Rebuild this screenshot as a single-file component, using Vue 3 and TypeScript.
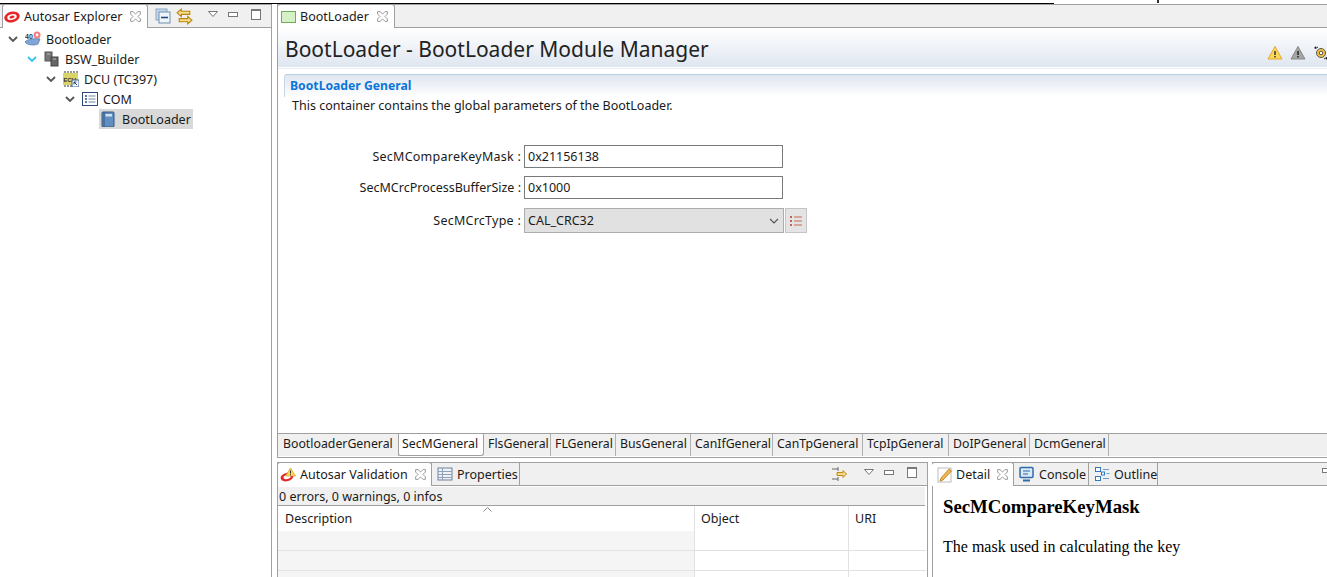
<script setup lang="ts">
const tree = [
  { label: 'Bootloader', icon: 'root', level: 0, chevron: 'gray' },
  { label: 'BSW_Builder', icon: 'bsw', level: 1, chevron: 'cyan' },
  { label: 'DCU (TC397)', icon: 'ecu', level: 2, chevron: 'gray' },
  { label: 'COM', icon: 'list', level: 3, chevron: 'gray' },
  { label: 'BootLoader', icon: 'book', level: 4, chevron: '', selected: true },
]

const moduleTabs = [
  { label: 'BootloaderGeneral', width: 121 },
  { label: 'SecMGeneral', width: 86, active: true },
  { label: 'FlsGeneral', width: 67 },
  { label: 'FLGeneral', width: 65 },
  { label: 'BusGeneral', width: 75 },
  { label: 'CanIfGeneral', width: 82 },
  { label: 'CanTpGeneral', width: 90 },
  { label: 'TcpIpGeneral', width: 86 },
  { label: 'DoIPGeneral', width: 81 },
  { label: 'DcmGeneral', width: 79 },
]
</script>

<template>
  <div class="screen">
    <div class="top-strip">
      <span class="top-hook"></span>
    </div>
    <div class="workbench">
      <!-- left view -->
      <aside class="explorer">
        <div class="view-head">
          <div class="view-tab explorer-tab">
            <svg class="ico" viewBox="0 0 16 16">
              <ellipse cx="8" cy="8" rx="7.800" ry="5.400" fill="#e8262a" transform="rotate(-14 8 8)" />
              <ellipse cx="8" cy="8" rx="4.800" ry="2.800" fill="#fff" transform="rotate(-14 8 8)" />
              <ellipse cx="8" cy="8" rx="2.600" ry="1.400" fill="#e8262a" transform="rotate(-14 8 8)" />
            </svg>
            <span>Autosar Explorer</span>
            <svg class="close" viewBox="1 1 9 9">
              <path d="M1.500 1.500h2l2 2 2-2h2v2l-2 2 2 2v2h-2l-2-2-2 2h-2v-2l2-2-2-2z" fill="#fff" stroke="#999" stroke-width=".8" />
            </svg>
          </div>
          <div class="head-tools">
            <svg class="ico" viewBox="0 0 16 16">
              <rect x="1" y="1" width="11" height="11" fill="#c4d6e8" stroke="#8aa8c4" />
              <rect x="4" y="4" width="11" height="11" fill="#eef4fa" stroke="#6e8fb0" />
              <path d="M6 9.500h7" stroke="#1f4f86" stroke-width="1.600" />
            </svg>
            <svg class="ico sync" viewBox="0 0 16 16">
              <path d="M5 1 1 4.500 5 8V6h8V3H5z" fill="#f6dc8c" stroke="#b8860b" />
              <path d="M11 8l4 3.500-4 3.500v-2H3v-3h8z" fill="#f6dc8c" stroke="#b8860b" />
            </svg>
            <span class="win-ctrls">
              <svg class="menu-tri" viewBox="0 0 10 6"><path d="M.5.500h9L5 5.500z" fill="#fff" stroke="#777" /></svg>
              <span class="ctl-min"></span>
              <span class="ctl-max"></span>
            </span>
          </div>
        </div>
        <ul class="tree">
          <li v-for="row in tree" :key="row.icon" class="tree-row" :style="{ paddingLeft: 8 + row.level * 19 + 'px' }">
            <span class="chevron-slot">
              <svg v-if="row.chevron" viewBox="0 0 10 7" class="chevron">
                <path d="M1 1l4 4 4-4" fill="none" :stroke="row.chevron === 'cyan' ? '#35c2f2' : '#555'" stroke-width="1.800" />
              </svg>
            </span>
            <span class="tree-item" :class="{ selected: row.selected }">
              <svg v-if="row.icon === 'root'" class="ico" viewBox="0 0 16 16">
                <path d="M0 11c2-3 10-4 15-3l-2 5c-4 2-11 1-13-2z" fill="#7ea6d8" stroke="#4c6f9f" stroke-width=".7" />
                <text x="0" y="7.500" class="tiny-num">40</text>
                <circle cx="12" cy="4" r="3.500" fill="#f47c7c" />
                <circle cx="12" cy="4" r="1.400" fill="#fff" />
              </svg>
              <svg v-else-if="row.icon === 'bsw'" class="ico" viewBox="0 0 16 16">
                <rect x="1" y="1" width="7" height="9" fill="#777" stroke="#555" />
                <rect x="7" y="6" width="7" height="9" fill="#666" stroke="#444" />
                <path d="M3 3h3M9 8h3" stroke="#bbb" />
              </svg>
              <svg v-else-if="row.icon === 'ecu'" class="ico" viewBox="0 0 16 16">
                <path d="M2 0v2M5 0v2M8 0v2M11 0v2M14 0v2M2 14v2M5 14v2M8 14v2" stroke="#333" />
                <rect x="0" y="2" width="15" height="12" fill="#d8d46a" />
                <text x=".5" y="10.500" class="tiny-ecu">ECU</text>
                <rect x="9" y="9" width="7" height="7" fill="#fff" stroke="#3b5f8c" />
                <path d="M11 11l3 3M11 11h2.500M11 11v2.500" stroke="#1c3f70" />
              </svg>
              <svg v-else-if="row.icon === 'list'" class="ico" viewBox="0 0 16 16">
                <rect x=".5" y="1.500" width="15" height="13" fill="#fff" stroke="#2c4a78" />
                <path d="M3 5h2M3 8h2M3 11h2" stroke="#2c4a78" stroke-width="1.400" />
                <path d="M6.500 5h7M6.500 8h7M6.500 11h7" stroke="#6f87a8" />
              </svg>
              <svg v-else class="ico" viewBox="0 0 16 16">
                <rect x="2" y="1" width="12" height="15" rx="1" fill="#5f8fc0" stroke="#32587f" />
                <path d="M4 1v15" stroke="#32587f" />
                <rect x="5.500" y="3" width="6.500" height="2.500" fill="#cfe0f0" />
              </svg>
              <span>{{ row.label }}</span>
            </span>
          </li>
        </ul>
      </aside>

      <main class="main-col">
        <!-- editor -->
        <section class="editor">
          <div class="view-head">
            <div class="view-tab editor-tab">
              <svg class="ico" viewBox="0 0 16 16">
                <rect x=".5" y="2.500" width="14" height="11" fill="#d6f0c8" stroke="#6fae58" />
              </svg>
              <span>BootLoader</span>
              <svg class="close" viewBox="1 1 9 9">
                <path d="M1.500 1.500h2l2 2 2-2h2v2l-2 2 2 2v2h-2l-2-2-2 2h-2v-2l2-2-2-2z" fill="#fff" stroke="#999" stroke-width=".8" />
              </svg>
            </div>
          </div>
          <header class="form-head">
            <h1>BootLoader - BootLoader Module Manager</h1>
            <div class="form-actions">
              <svg class="ico" viewBox="0 0 16 16">
                <path d="M8 1.500 15 14H1z" fill="#fbd95c" stroke="#e2a92c" />
                <path d="M8 6v4M8 11v1.500" stroke="#333" stroke-width="1.500" />
              </svg>
              <svg class="ico" viewBox="0 0 16 16">
                <path d="M8 1.500 15 14H1z" fill="#a5a5a5" stroke="#888" />
                <path d="M8 6v4M8 11v1.500" stroke="#222" stroke-width="1.500" />
              </svg>
              <svg class="ico" viewBox="0 0 16 16">
                <circle cx="8" cy="8" r="4.500" fill="#f5c542" stroke="#555" />
                <circle cx="8" cy="8" r="1.800" fill="#fff" stroke="#555" />
                <path d="M1 3l2-2v3zM15 13l-2 2v-3z" fill="#222" />
                <path d="M2.500 3.500 5 2M13.500 12.500 11 14" stroke="#222" />
              </svg>
            </div>
          </header>
          <div class="form-section">
            <div class="section-bar">BootLoader General</div>
            <p class="section-desc">This container contains the global parameters of the BootLoader.</p>
            <div class="fields">
              <label class="wide-label">SecMCompareKeyMask :</label>
              <div class="text-field">0x21156138</div>
              <label>SecMCrcProcessBufferSize :</label>
              <div class="text-field">0x1000</div>
              <label class="wide-label combo-label">SecMCrcType :</label>
              <div class="combo-line">
                <div class="combo">
                  <span>CAL_CRC32</span>
                  <svg class="combo-arrow" viewBox="0 0 10 6">
                    <path d="M1 1l4 4 4-4" fill="none" stroke="#555" stroke-width="1.200" />
                  </svg>
                </div>
                <div class="combo-btn">
                  <svg viewBox="0 0 14 12" class="list-ico">
                    <path d="M1 2h2M1 6h2M1 10h2" stroke="#b03a20" stroke-width="1.400" />
                    <path d="M5 2h8M5 6h8M5 10h8" stroke="#c8684f" />
                  </svg>
                </div>
              </div>
            </div>
          </div>
          <nav class="module-tabs">
            <div
              v-for="tab in moduleTabs"
              :key="tab.label"
              class="module-tab"
              :class="{ active: tab.active }"
              :style="{ width: tab.width + 'px' }"
            >
              {{ tab.label }}
            </div>
          </nav>
        </section>

        <div class="bottom-row">
          <!-- validation view -->
          <section class="validation">
            <div class="view-head">
              <div class="view-tab validation-tab">
                <svg class="ico" viewBox="0 0 16 16">
                  <ellipse cx="7" cy="10" rx="6.500" ry="4.200" fill="#e8262a" transform="rotate(-14 7 10)" />
                  <ellipse cx="7" cy="10" rx="3.600" ry="2" fill="#fff" transform="rotate(-14 7 10)" />
                  <path d="M10.500 1 15.500 9h-10z" fill="#fbd95c" stroke="#d69a24" stroke-width=".7" />
                  <path d="M10.500 3.500v3M10.500 7.200v1" stroke="#333" />
                </svg>
                <span>Autosar Validation</span>
                <svg class="close" viewBox="1 1 9 9">
                  <path d="M1.500 1.500h2l2 2 2-2h2v2l-2 2 2 2v2h-2l-2-2-2 2h-2v-2l2-2-2-2z" fill="#fff" stroke="#999" stroke-width=".8" />
                </svg>
              </div>
              <div class="plain-tab properties-tab">
                <svg class="ico" viewBox="0 0 16 16">
                  <rect x="1" y="2" width="14" height="12" fill="#eef2f7" stroke="#6d8199" />
                  <path d="M1 5.500h14M1 8.500h14M1 11.500h14M5.500 2v12" stroke="#8ea1b6" />
                </svg>
                <span>Properties</span>
              </div>
              <div class="validation-tools">
                <svg class="ico" viewBox="0 0 16 16">
                  <path d="M1 3h6M1 13h6M7 1v4M7 11v4" stroke="#666" />
                  <path d="M6 6.500h6V4.500l3.500 3.500-3.500 3.500V9.500H6z" fill="#f4d98c" stroke="#c08a16" />
                </svg>
                <span class="win-ctrls">
                  <svg class="menu-tri" viewBox="0 0 10 6"><path d="M.5.500h9L5 5.500z" fill="#fff" stroke="#777" /></svg>
                  <span class="ctl-min"></span>
                  <span class="ctl-max"></span>
                </span>
              </div>
            </div>
            <div class="status-line">0 errors, 0 warnings, 0 infos</div>
            <div class="table">
              <div class="col-head desc-col">
                Description
                <svg class="sort" viewBox="0 0 9 5"><path d="M.5 4.500 4.500.500l4 4" fill="none" stroke="#888" /></svg>
              </div>
              <div class="col-head">Object</div>
              <div class="col-head no-line">URI</div>
              <template v-for="n in 3" :key="n">
                <div class="cell desc-cell"></div>
                <div class="cell"></div>
                <div class="cell no-line"></div>
              </template>
            </div>
          </section>

          <!-- detail view -->
          <section class="detail">
            <div class="view-head">
              <div class="view-tab detail-tab">
                <svg class="ico" viewBox="0 0 16 16">
                  <rect x="1" y="1" width="13" height="14" fill="#fff" stroke="#bbb" />
                  <path d="M4 11 12 2l2.500 2L6 13l-3 1z" fill="#f2b84b" stroke="#b87a1e" stroke-width=".8" />
                </svg>
                <span>Detail</span>
                <svg class="close" viewBox="1 1 9 9">
                  <path d="M1.500 1.500h2l2 2 2-2h2v2l-2 2 2 2v2h-2l-2-2-2 2h-2v-2l2-2-2-2z" fill="#fff" stroke="#999" stroke-width=".8" />
                </svg>
              </div>
              <div class="plain-tab console-tab">
                <svg class="ico" viewBox="0 0 16 16">
                  <rect x="1" y="1.500" width="13" height="10" rx="1" fill="#dbe8f5" stroke="#2f6cab" stroke-width="1.500" />
                  <path d="M4 14.500h7" stroke="#2f6cab" stroke-width="2" />
                  <path d="M4 5h7M4 8h5" stroke="#2f6cab" />
                </svg>
                <span>Console</span>
              </div>
              <div class="plain-tab outline-tab">
                <svg class="ico" viewBox="0 0 16 16">
                  <rect x="1.500" y="1.500" width="5" height="4" fill="#fff" stroke="#2f78c0" />
                  <rect x="1.500" y="10.500" width="5" height="4" fill="#fff" stroke="#2f78c0" />
                  <rect x="7.500" y="6" width="3" height="3" fill="#fff" stroke="#2f78c0" />
                  <path d="M9 3.500h6M12.500 7.500h3M9 12.500h6" stroke="#6f9cc8" />
                </svg>
                <span>Outline</span>
              </div>
              <div class="detail-tools"><span class="ctl-min"></span></div>
            </div>
            <article class="detail-body">
              <h2>SecMCompareKeyMask</h2>
              <p>The mask used in calculating the key</p>
            </article>
          </section>
        </div>
      </main>
    </div>
  </div>
</template>

<style>
html,
body {
  margin: 0;
  background: #fff;
  overflow: hidden;
}
</style>

<style scoped>
.screen {
  width: 1327px;
  height: 577px;
  overflow: hidden;
  display: flex;
  flex-direction: column;
  font-family: 'Noto Sans', 'Open Sans', sans-serif;
  font-size: 12.500px;
  color: #1a1a1a;
  background: #fff;
}

.top-strip {
  position: relative;
  height: 3px;
  flex: none;
  border-bottom: 1px solid #000;
  margin-right: 273px;
}

.top-hook {
  position: absolute;
  left: 1157px;
  top: 0;
  width: 2px;
  height: 3px;
  background: #333;
}

.workbench {
  flex: 1;
  min-height: 0;
  display: flex;
}

.explorer {
  width: 271px;
  flex: none;
  border-right: 1px solid #a0a0a0;
}

.view-head {
  display: flex;
  align-items: stretch;
  height: 22px;
  background: #f0f0f0;
  border-top: 1px solid #a0a0a0;
  border-bottom: 1px solid #a0a0a0;
}

.view-tab {
  display: flex;
  align-items: center;
  gap: 4px;
  height: 24px;
  background: #fff;
  border: 1px solid #a0a0a0;
  border-bottom: 0;
  border-top-left-radius: 3px;
  border-top-right-radius: 3px;
  margin-top: -1px;
  white-space: nowrap;
  box-sizing: border-box;
}

.plain-tab {
  display: flex;
  align-items: center;
  gap: 4px;
  border-right: 1px solid #a0a0a0;
  white-space: nowrap;
}

.ico {
  width: 16px;
  height: 16px;
  flex: none;
}

.close {
  width: 11px;
  height: 11px;
  flex: none;
}

.explorer-tab {
  width: 146px;
  margin-left: 2px;
  padding-left: 1px;
}

.explorer-tab .close {
  margin-left: 4px;
}

.head-tools {
  flex: 1;
  display: flex;
  align-items: center;
  padding-left: 7px;
  gap: 5px;
}

.sync {
  width: 17px;
  height: 17px;
}

.win-ctrls {
  margin-left: auto;
  display: flex;
  align-items: center;
  gap: 10px;
  padding-right: 10px;
  margin-top: -4px;
}

.menu-tri {
  width: 10px;
  height: 6px;
}

.ctl-min {
  display: block;
  width: 8px;
  height: 3px;
  border: 1px solid #777;
  background: #fff;
}

.ctl-max {
  display: block;
  width: 8px;
  height: 8px;
  margin-left: 3px;
  border: 1px solid #777;
  border-top-width: 2px;
  background: #fff;
}

.tree {
  list-style: none;
  margin: 1px 0 0;
  padding: 0;
}

.tree-row {
  display: flex;
  align-items: center;
  height: 20px;
}

.chevron-slot {
  width: 10px;
  margin-right: 6px;
  display: flex;
}

.chevron {
  width: 10px;
  height: 7px;
}

.tree-item {
  display: flex;
  align-items: center;
  gap: 5px;
  height: 20px;
  padding: 0 1px;
}

.tree-item.selected {
  background: #d9d9d9;
  margin-left: -1px;
  gap: 6px;
  padding-right: 2px;
}

.tiny-num {
  font-size: 7px;
  font-weight: 700;
  fill: #333;
  font-family: 'Liberation Sans', sans-serif;
}

.tiny-ecu {
  font-size: 6px;
  font-weight: 700;
  fill: #333;
  font-family: 'Liberation Sans', sans-serif;
}

.main-col {
  flex: 1;
  min-width: 0;
  display: flex;
  flex-direction: column;
  padding-left: 5px;
}

.editor {
  height: 454px;
  flex: none;
  display: flex;
  flex-direction: column;
  border-left: 1px solid #a0a0a0;
  border-bottom: 1px solid #a0a0a0;
  box-sizing: border-box;
}

.editor-tab {
  width: 117px;
  padding-left: 3px;
  border-left: 0;
  gap: 3px;
}

.editor-tab .close {
  margin-left: 5px;
}

.form-head {
  height: 39px;
  flex: none;
  display: flex;
  align-items: center;
  justify-content: space-between;
  background: linear-gradient(#fff, #dfe6f0);
  border-bottom: 1px solid #fff;
  box-shadow: 0 1px 0 #e6ecf3;
}

.form-head h1 {
  margin: 2px 0 0 7px;
  font-size: 21px;
  font-weight: 400;
  color: #222;
}

.form-actions {
  display: flex;
  gap: 7px;
  margin-top: 11px;
  margin-right: -2px;
  flex: none;
}

.form-section {
  flex: 1;
  min-height: 0;
  padding: 6px 0 0 6px;
}

.section-bar {
  height: 23px;
  box-sizing: border-box;
  padding: 2px 0 0 5px;
  font-size: 12.200px;
  font-weight: 700;
  color: #0a76d8;
  background: linear-gradient(#dfe6f0, #fff);
  border-top: 1px solid #bcd0e0;
  border-left: 1px solid #c6d6e4;
  border-top-left-radius: 3px;
  line-height: 17px;
}

.section-desc {
  margin: 0;
  padding-left: 8px;
  line-height: 17px;
}

.fields {
  margin-top: 31px;
  display: grid;
  grid-template-columns: 237px 259px;
  row-gap: 8px;
  column-gap: 3px;
  align-items: center;
}

.fields label {
  text-align: right;
  white-space: nowrap;
}

.fields .wide-label {
  letter-spacing: 0.25px;
}

.text-field {
  height: 23px;
  box-sizing: border-box;
  border: 1px solid #7a7a7a;
  padding-left: 3px;
  line-height: 21px;
  background: #fff;
}

.combo-line {
  display: flex;
  gap: 1px;
  width: 283px;
  margin-top: 1px;
}

.combo-label {
  margin-top: 1px;
}

.combo {
  width: 260px;
  height: 25px;
  flex: none;
  box-sizing: border-box;
  display: flex;
  align-items: center;
  justify-content: space-between;
  padding: 0 4px 0 3px;
  background: #e1e1e1;
  border: 1px solid #adadad;
}

.combo-arrow {
  width: 10px;
  height: 6px;
}

.combo-btn {
  width: 22px;
  height: 25px;
  flex: none;
  box-sizing: border-box;
  display: flex;
  align-items: center;
  justify-content: center;
  background: #e4e4e4;
  border: 1px solid #c4c4c4;
}

.list-ico {
  width: 14px;
  height: 12px;
}

.module-tabs {
  height: 22px;
  flex: none;
  display: flex;
  background: #f0f0f0;
  border-top: 1px solid #a0a0a0;
  margin-bottom: 1px;
  font-size: 12.300px;
}

.module-tab {
  flex: none;
  box-sizing: border-box;
  padding-left: 4px;
  line-height: 20px;
  height: 22px;
  border-right: 1px solid #b0b0b0;
  white-space: nowrap;
}

.module-tab:first-child {
  padding-left: 5px;
}

.module-tab.active {
  background: #fff;
  padding-left: 3px;
  border: 1px solid #a0a0a0;
  border-top: 0;
  border-bottom-left-radius: 3px;
  border-bottom-right-radius: 3px;
  margin-left: -1px;
}

.bottom-row {
  flex: 1;
  min-height: 0;
  margin-top: 4px;
  display: flex;
  gap: 4px;
}

.validation {
  width: 651px;
  flex: none;
  box-sizing: border-box;
  border-left: 1px solid #a0a0a0;
  border-right: 1px solid #a0a0a0;
  min-height: 0;
}

.validation-tab {
  width: 155px;
  margin-left: -1px;
  padding-left: 2px;
}

.validation-tab .close {
  margin-left: 3px;
}

.properties-tab {
  width: 88px;
  box-sizing: border-box;
  padding-left: 5px;
}

.validation-tools {
  flex: 1;
  display: flex;
  align-items: center;
  padding-left: 311px;
}

.status-line {
  height: 17px;
  padding: 1px 0 0 1px;
  line-height: 18px;
  background: #f0f0f0;
  border-top: 1px solid #fff;
  border-bottom: 1px solid #a0a0a0;
  margin-right: 2px;
}

.table {
  display: grid;
  grid-template-columns: 417px 154px 77px;
  grid-auto-rows: 20px;
  grid-template-rows: 25px;
}

.col-head {
  position: relative;
  padding: 4px 0 0 6px;
  border-right: 1px solid #e2e2e2;
  line-height: 18px;
}

.col-head.desc-col {
  padding-left: 7px;
}

.sort {
  position: absolute;
  left: 205px;
  top: 1px;
  width: 9px;
  height: 5px;
}

.cell {
  border-right: 1px solid #e2e2e2;
  border-bottom: 1px solid #e2e2e2;
}

.desc-cell {
  background: #f5f5f5;
}

.no-line {
  border-right: 0;
}

.detail {
  flex: 1;
  min-width: 0;
  border-left: 1px solid #a0a0a0;
}

.detail-tab {
  width: 82px;
  margin-left: -1px;
  padding-left: 5px;
  border-left: 0;
  gap: 3px;
}

.detail-tab .close {
  margin-left: 4px;
}

.console-tab {
  width: 75px;
  box-sizing: border-box;
  padding-left: 5px;
}

.outline-tab {
  width: 69px;
  box-sizing: border-box;
  padding-left: 5px;
}

.detail-tools {
  flex: 1;
  display: flex;
  justify-content: flex-end;
  padding: 5px 0 0 0;
}

.detail-tools .ctl-min {
  margin-right: -5px;
}

.detail-body {
  padding: 10px 0 0 10px;
  font-family: 'Liberation Serif', serif;
  color: #000;
}

.detail-body h2 {
  margin: 0;
  font-size: 18.800px;
  line-height: 21px;
}

.detail-body p {
  margin: 21px 0 0;
  font-size: 16px;
  line-height: 18px;
}
</style>
